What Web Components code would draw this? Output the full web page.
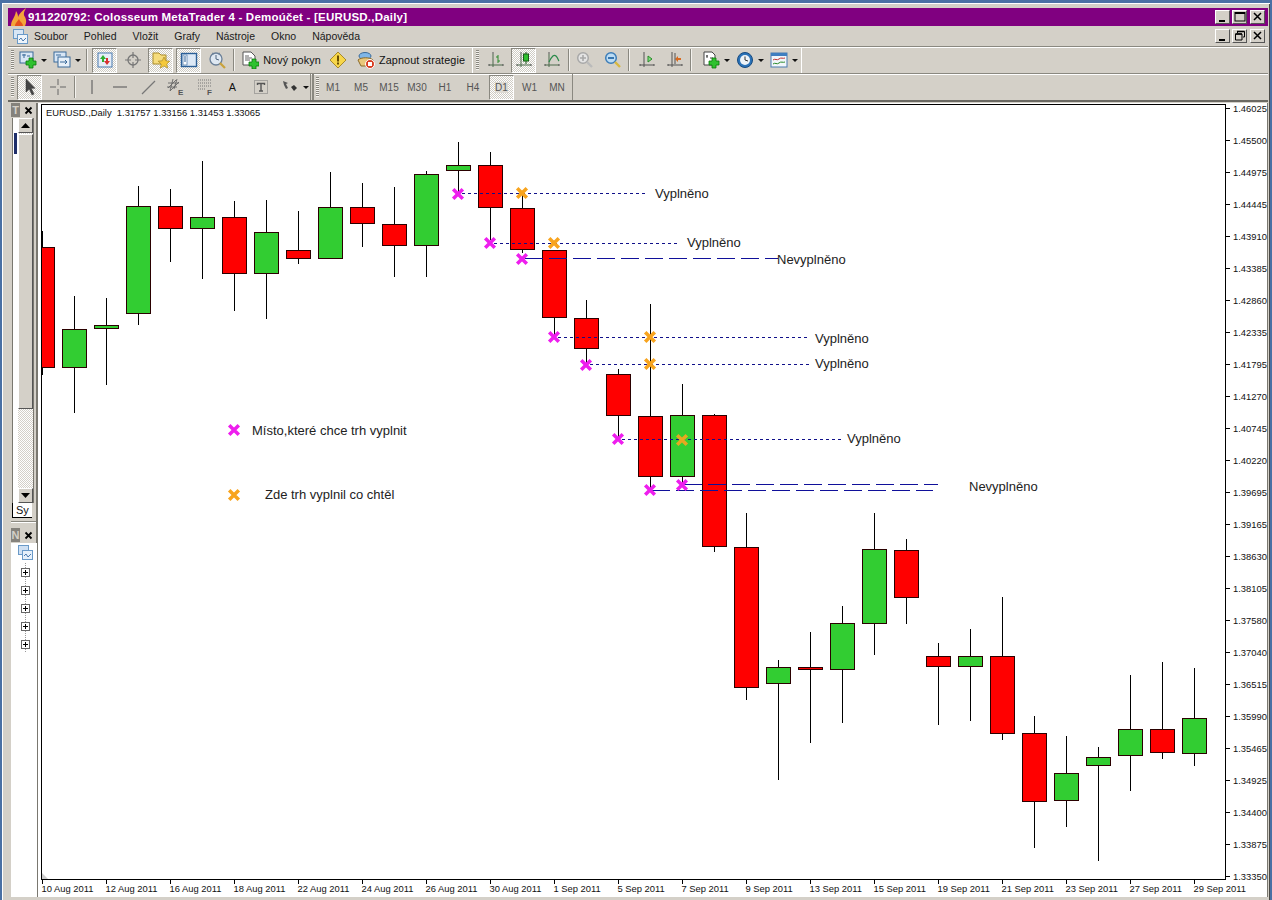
<!DOCTYPE html>
<html lang="cs"><head><meta charset="utf-8"><title>MetaTrader 4</title>
<style>html,body{margin:0;padding:0;background:#d4d0c8;overflow:hidden}</style></head>
<body>
<mt-app>
  <mt-titlebar slot="top">911220792: Colosseum MetaTrader 4 - Demoúčet - [EURUSD.,Daily]</mt-titlebar>
  <mt-menubar slot="top"></mt-menubar>
  <mt-toolbars slot="top"></mt-toolbars>
  <mt-sidebar slot="side"></mt-sidebar>
  <mt-chart slot="main"></mt-chart>
</mt-app>
<script>
const FONT='"Liberation Sans",Arial,sans-serif';
const plus=(x,y)=>`<path d="M${x-2} ${y-5}h4v3h3v4h-3v3h-4v-3h-3v-4h3z" fill="#2fc12f" stroke="#0a7a0a" stroke-width=".8"/>`;
const axes=(c='#4d6b4d')=>`<path d="M6 3v13M2 14h14" stroke="${c}" stroke-width="1" fill="none"/><path d="M1 14h2M15 14h2M5 2h2" stroke="#555" stroke-width="1"/>`;
const ICONS={
 newchart:`<rect x="1" y="1" width="13" height="11" fill="#d8e6f5" stroke="#3a6a9a"/><path d="M3 4h4M5 3v4M8 5h3" stroke="#3a6a9a"/>${plus(12,12)}`,
 profile:`<rect x="1" y="1" width="12" height="10" fill="#d8e6f5" stroke="#3a6a9a"/><rect x="5" y="6" width="12" height="10" fill="#e8f0f8" stroke="#3a6a9a"/><path d="M3 4h5M7 11h7M12 9l2 2-2 2" stroke="#3a6a9a" fill="none"/>`,
 market:`<rect x="2" y="2" width="14" height="14" fill="#e6eef8" stroke="#4a7ab0"/><path d="M7 4l-3 4h2v3h2V8h2z" fill="#2fae2f"/><path d="M11 14l3-4h-2V7h-2v3H8z" fill="#d83030"/>`,
 cross:`<circle cx="9" cy="9" r="5" fill="none" stroke="#777" stroke-width="1.3"/><path d="M9 1v6M9 11v6M1 9h6M11 9h6" stroke="#777" stroke-width="1.2"/>`,
 folder:`<path d="M1 2h6l2 2h5v9H1z" fill="#f6dc7c" stroke="#a88a2a"/><path d="M12 6l1.800 3.800 4 .4-3 2.800.9 4.100-3.700-2.100-3.700 2.100.9-4.100-3-2.800 4-.4z" fill="#f5c93a" stroke="#a88a2a" stroke-width=".7"/>`,
 nav:`<rect x="1.500" y="2.500" width="15" height="13" fill="#dde9f6" stroke="#2b5f97" stroke-width="1.400"/><rect x="3" y="4" width="4" height="10" fill="#fff" stroke="#2b5f97" stroke-width=".6"/><path d="M4 6h2M4 8h2M4 10h2" stroke="#2b5f97"/>`,
 clockzoom:`<circle cx="8" cy="8" r="6" fill="#dfe8f2" stroke="#6a7f98" stroke-width="1.300"/><path d="M8 4v4l3 1" stroke="#50667f" fill="none"/><path d="M4 2l2 1M12 2l-2 1" stroke="#6a7f98"/><path d="M12 12l5 5" stroke="#c9a23c" stroke-width="2.200"/>`,
 order:`<path d="M2 1h8l4 4v9H2z" fill="#fff" stroke="#555"/><path d="M4 5h4M4 7h7M4 9h5" stroke="#666"/>${plus(13,13)}`,
 warn:`<path d="M9 1l8 8-8 8-8-8z" fill="#f7d64a" stroke="#a88a2a"/><rect x="8" y="4.500" width="2" height="6" fill="#6a4e00"/><rect x="8" y="11.500" width="2" height="2" fill="#6a4e00"/>`,
 strat:`<ellipse cx="8" cy="5" rx="6" ry="3.500" fill="#7fb6e8" stroke="#3a6a9a"/><path d="M1 9c3-3 12-3 15 0l-3 6H4z" fill="#e9c77a" stroke="#8a6a2a"/><circle cx="13" cy="13" r="4.500" fill="#d83c20" stroke="#fff"/><rect x="11" y="11" width="4" height="4" fill="#fff"/>`,
 bars:axes()+`<path d="M11 4v8M9 6h2M11 10h2" stroke="#2a8a2a" fill="none"/>`,
 candle:axes()+`<path d="M11 1v12" stroke="#1a5a1a"/><rect x="8.500" y="3" width="5" height="7" fill="#2fc12f" stroke="#1a5a1a"/>`,
 line:axes()+`<path d="M6 11c3-6 5-8 7-6s2 4 3 5" stroke="#2a8a4a" fill="none" stroke-width="1.200"/>`,
 zin:`<circle cx="7" cy="7" r="5.300" fill="#e4e4e4" stroke="#a8a8a8" stroke-width="1.500"/><path d="M4 7h6M7 4v6" stroke="#a8a8a8" stroke-width="1.600"/><path d="M11 11l5 5" stroke="#bbb" stroke-width="2.400"/>`,
 zout:`<circle cx="7" cy="7" r="5.300" fill="#bcdcf4" stroke="#3d7db8" stroke-width="1.500"/><path d="M4 7h6" stroke="#2a6aa8" stroke-width="1.800"/><path d="M11 11l5 5" stroke="#d8b840" stroke-width="2.400"/>`,
 shift:axes('#555')+`<path d="M10 5l4 3-4 3z" fill="#7fe07f" stroke="#2a8a2a"/>`,
 auto:axes('#555')+`<path d="M9 8l3-3v2h3v2h-3v2z" fill="#d86a20"/><path d="M9 2v11" stroke="#555"/>`,
 template:`<path d="M2 1h8l3 3v10H2z" fill="#fff" stroke="#444"/><path d="M4 5h2M5 4v3M8 7h3" stroke="#444"/>${plus(12,12)}`,
 clock:`<circle cx="9" cy="9" r="7.500" fill="#2a72b8" stroke="#174a80"/><circle cx="9" cy="9" r="5" fill="#eef3f8"/><path d="M9 5.500V9l3 1" stroke="#333" fill="none"/>`,
 tmpl2:`<rect x="1" y="2" width="16" height="14" fill="#f2f6fa" stroke="#4a7ab0"/><rect x="1" y="2" width="16" height="3" fill="#3f7ec0"/><path d="M3 9c2-2 4 1 6-1s4 0 6-1" stroke="#c03030" fill="none"/><path d="M3 13c2-2 4 1 6-1s4 0 6-1" stroke="#2a8a2a" fill="none"/>`,
 pointer:`<path d="M5 1v13l3.300-3 2.700 6 2-1-2.700-5.700H14z" fill="#444" stroke="#333" stroke-width=".5"/>`,
 crosshair:`<path d="M9 1v6M9 11v6M1 9h6M11 9h6" stroke="#666"/>`,
 vline:`<path d="M9 2v14" stroke="#666" stroke-width="1.200"/>`,
 hline:`<path d="M2 9h14" stroke="#666" stroke-width="1.200"/>`,
 trend:`<path d="M3 16L16 3" stroke="#777" stroke-width="1.200"/>`,
 channel:`<path d="M1 10L9 2M3 13L12 4M1 5h11M0 9h10M6 1L3 13M10 1L7 11" stroke="#666" fill="none" stroke-width=".9"/><text x="11" y="17" font-family="Liberation Sans" font-size="8" font-weight="bold" fill="#555">E</text>`,
 fib:`<path d="M2 2h14M2 5h14M2 8h14M2 11h8" stroke="#777" stroke-dasharray="1 1"/><text x="11" y="17" font-family="Liberation Sans" font-size="8" font-weight="bold" fill="#555">F</text>`,
 tbox:`<rect x="2.500" y="2.500" width="13" height="13" fill="none" stroke="#777" stroke-dasharray="1 1"/><path d="M5.500 7V5.500h7V7M9 5.500V13M7 13h4" stroke="#555" stroke-width="1.400" fill="none"/>`,
 arrows:`<path d="M2 3l5 2-2 1 2 4-2 1-2-4z" fill="#555"/><path d="M10 9l3-2 3 3-3 3z" fill="#333"/>`
};
const svg=(k,s=18)=>`<svg width="${s}" height="${s}" viewBox="0 0 18 18" aria-hidden="true">${ICONS[k]||''}</svg>`;

class MtTool extends HTMLElement{
 connectedCallback(){
  const w=this.getAttribute('w')||28,ic=this.getAttribute('icon'),ch=this.getAttribute('label'),dd=this.hasAttribute('drop');
  const r=this.attachShadow({mode:'open'});
  r.innerHTML=`<style>
  :host{display:inline-flex;align-items:center;justify-content:center;box-sizing:border-box;height:25px;flex:none;width:${w}px;gap:4px;font:10.8px ${FONT};letter-spacing:.12px;color:#111}
  :host([pressed]){border:1px solid;border-color:#8a8880 #fff #fff #8a8880;background:repeating-conic-gradient(#fff 0 25%,#cfccc4 0 50%) 0 0/2px 2px}
  :host([small]){font-size:10px;color:#555;letter-spacing:0}
  svg{display:block;flex:none}
  i{width:0;height:0;border:3px solid transparent;border-top-color:#111;border-bottom:0;flex:none}
  span{white-space:nowrap}
  :host([pressed]) span{background:#dedbd4}
  </style>${ic?svg(ic):''}${ch?`<span>${ch}</span>`:''}${dd?'<i></i>':''}`;
 }
}
customElements.define('mt-tool',MtTool);

class MtSep extends HTMLElement{connectedCallback(){this.attachShadow({mode:'open'}).innerHTML=`<style>:host{display:block;flex:none;width:1px;height:22px;background:#8a8880;border-right:1px solid #f4f2ee;margin:0 ${this.getAttribute('m')||3}px}</style>`}}
customElements.define('mt-sep',MtSep);
class MtGrip extends HTMLElement{connectedCallback(){this.attachShadow({mode:'open'}).innerHTML=`<style>:host{display:block;flex:none;width:3px;height:20px;background:repeating-linear-gradient(#8a8880 0 1px,#f4f2ee 1px 2px)}</style>`}}
customElements.define('mt-grip',MtGrip);

class MtWinBtn extends HTMLElement{connectedCallback(){
 const k=this.getAttribute('k');
 const g={min:'<path d="M2 10h6" stroke="#000" stroke-width="2"/>',max:'<rect x="1" y="1.500" width="10" height="8.500" fill="none" stroke="#000"/><path d="M1 2h10" stroke="#000" stroke-width="2"/>',close:'<path d="M2 2l7 7M9 2l-7 7" stroke="#000" stroke-width="1.500"/>',restore:'<path d="M3.500 3V1.500h7V7H9M1.500 4h6.500v6H1.500z" fill="none" stroke="#000"/><path d="M3 1.500h7.500M1.500 4H8" stroke="#000" stroke-width="1.500"/>'}[k];
 this.attachShadow({mode:'open'}).innerHTML=`<style>:host{display:flex;align-items:center;justify-content:center;box-sizing:border-box;width:15px;height:14px;flex:none;background:#d4d0c8;border:1px solid;border-color:#fff #555 #555 #fff}</style><svg width="12" height="12" viewBox="0 0 12 12">${g}</svg>`}}
customElements.define('mt-winbtn',MtWinBtn);

class MtTitlebar extends HTMLElement{connectedCallback(){
 const r=this.attachShadow({mode:'open'});
 r.innerHTML=`<style>:host{display:flex;align-items:center;height:18px;background:#800080;color:#fff;font:bold 11.5px ${FONT};padding:0 3px 0 2px}
 svg{flex:none;margin-right:1px}.t{flex:1;white-space:nowrap;letter-spacing:.21px}.b{display:flex;gap:2px}</style>
 <svg width="17" height="18" viewBox="0 0 17 18"><path d="M1 18C1 12 5 10 6 3c2 3 2 5 2 6 1-3 4-6 8-9-2 4-3 6-1 9 2 4 1 7 0 9z" fill="#f4a53a"/><path d="M5 18c0-3 3-5 4-7 1 3 4 4 4 7z" fill="#e5501e"/></svg>
 <div class="t"><slot></slot></div><div class="b"><mt-winbtn k="min"></mt-winbtn><mt-winbtn k="max"></mt-winbtn><mt-winbtn k="close" style="margin-left:1px"></mt-winbtn></div>`;
}}
customElements.define('mt-titlebar',MtTitlebar);

class MtMenubar extends HTMLElement{connectedCallback(){
 const r=this.attachShadow({mode:'open'});
 const items=['Soubor','Pohled','Vložit','Grafy','Nástroje','Okno','Nápověda'];
 r.innerHTML=`<style>:host{display:flex;align-items:center;height:20px;font:10.5px ${FONT};color:#1a1a1a;padding:0 3px 0 5px;border-bottom:1px solid #8a8880;box-shadow:0 1px 0 #fff}
 svg{flex:none;margin-right:6px}.m{display:flex;gap:16px;flex:1}.b{display:flex;gap:2px}</style>
 <svg width="15" height="15" viewBox="0 0 15 15"><rect x=".5" y=".5" width="10" height="9" fill="#d8e6f5" stroke="#6a9ac8"/><rect x="4.500" y="5.500" width="10" height="9" fill="#eef4fa" stroke="#6a9ac8"/><path d="M6 11l2-2 2 3 3-3" stroke="#4a7ab0" fill="none"/></svg>
 <div class="m">${items.map(i=>`<span>${i}</span>`).join('')}</div>
 <div class="b"><mt-winbtn k="min"></mt-winbtn><mt-winbtn k="restore"></mt-winbtn><mt-winbtn k="close" style="margin-left:1px"></mt-winbtn></div>`;
}}
customElements.define('mt-menubar',MtMenubar);

class MtToolbars extends HTMLElement{connectedCallback(){
 const r=this.attachShadow({mode:'open'});
 r.innerHTML=`<style>:host{display:block;border-bottom:2px solid #6a6862}
 .row{display:flex;align-items:center;box-sizing:border-box;height:27px;border-bottom:1px solid #8a8880;box-shadow:0 1px 0 #fff inset}
 .row2{height:26px;border-bottom:0}
 .bar{display:flex;align-items:center;height:100%;box-sizing:border-box;padding-left:3px;border-right:1px solid #8a8880}
 </style>
 <div class="row">
  <div class="bar" style="width:465px;border-right:1px solid #fff">
   <mt-grip></mt-grip><mt-tool icon="newchart" drop w="33" style="margin-left:2px"></mt-tool><mt-tool icon="profile" drop w="35"></mt-tool>
   <mt-sep m="2"></mt-sep><mt-tool icon="market" pressed w="25" style="margin-left:2px"></mt-tool><mt-tool icon="cross" w="31"></mt-tool><mt-tool icon="folder" pressed w="25"></mt-tool><mt-tool icon="nav" pressed w="25" style="margin-left:3px"></mt-tool><mt-tool icon="clockzoom" w="31"></mt-tool>
   <mt-sep m="1"></mt-sep><mt-tool icon="order" label="Nový pokyn" w="88" style="margin-left:1px"></mt-tool><mt-tool icon="warn" w="24" style="margin-left:1px"></mt-tool><mt-tool icon="strat" label="Zapnout strategie" w="118" style="margin-left:2px"></mt-tool>
  </div>
  <div class="bar" style="width:329px;border-right:1px solid #fff">
   <mt-grip></mt-grip><mt-tool icon="bars" w="28" style="margin-left:3px"></mt-tool><mt-tool icon="candle" pressed w="25" style="margin-left:1px"></mt-tool><mt-tool icon="line" w="30" style="margin-left:1px"></mt-tool>
   <mt-sep m="1"></mt-sep><mt-tool icon="zin" w="28"></mt-tool><mt-tool icon="zout" w="28"></mt-tool><mt-sep m="1"></mt-sep><mt-tool icon="shift" w="28" style="margin-left:2px"></mt-tool><mt-tool icon="auto" w="28"></mt-tool><mt-sep m="1"></mt-sep><mt-tool icon="template" drop w="34" style="margin-left:6px"></mt-tool><mt-tool icon="clock" drop w="36" style="margin-left:-1px"></mt-tool><mt-tool icon="tmpl2" drop w="36" style="margin-left:-2px"></mt-tool>
  </div>
 </div>
 <div class="row row2">
  <div class="bar" style="width:303px;border-right:1px solid #8a8880">
   <mt-grip></mt-grip><mt-tool icon="pointer" pressed w="25" style="margin-left:3px"></mt-tool><mt-tool icon="crosshair" w="31"></mt-tool><mt-sep m="1"></mt-sep><mt-tool icon="vline" w="29"></mt-tool><mt-tool icon="hline" w="28"></mt-tool><mt-tool icon="trend" w="28"></mt-tool><mt-tool icon="channel" w="28"></mt-tool><mt-tool icon="fib" w="28" style="margin-left:1px"></mt-tool><mt-tool label="A" w="27" style="font:bold 12px ${FONT};color:#666;margin-left:-5px"></mt-tool><mt-tool icon="tbox" w="28" style="margin-left:1px"></mt-tool><mt-tool icon="arrows" drop w="34" style="margin-left:3px"></mt-tool>
  </div>
  <div class="bar" style="width:261px;padding-left:2px;border-left:2px solid #8a8880;margin-left:1px">
   <mt-grip></mt-grip><mt-tool small label="M1" w="28"></mt-tool><mt-tool small label="M5" w="28"></mt-tool><mt-tool small label="M15" w="28"></mt-tool><mt-tool small label="M30" w="28"></mt-tool><mt-tool small label="H1" w="28"></mt-tool><mt-tool small label="H4" w="28"></mt-tool><mt-tool small pressed label="D1" w="25" style="margin-left:2px"></mt-tool><mt-tool small label="W1" w="31"></mt-tool><mt-tool small label="MN" w="24"></mt-tool>
  </div>
 </div>`;
}}
customElements.define('mt-toolbars',MtToolbars);

class MtPanelHead extends HTMLElement{connectedCallback(){
 this.attachShadow({mode:'open'}).innerHTML=`<style>:host{display:flex;align-items:center;justify-content:space-between;height:14px;padding:0 3px 0 0;font:bold 11px ${FONT}}
 b{display:block;width:9px;height:14px;background:#85827c;color:#d4d0c8;font:bold 11px ${FONT};text-align:center;line-height:14px;overflow:hidden}
 svg{display:block}</style><b>${this.getAttribute('t')}</b><svg width="9" height="9" viewBox="0 0 9 9"><path d="M1.500 1.500l6 6M7.500 1.500l-6 6" stroke="#000" stroke-width="1.800"/></svg>`}}
customElements.define('mt-panelhead',MtPanelHead);

class MtSidebar extends HTMLElement{connectedCallback(){
 const r=this.attachShadow({mode:'open'});
 const btn=(up)=>`<div class="sb"><svg width="9" height="5" viewBox="0 0 9 5"><path d="${up?'M0 5L4.500 0 9 5z':'M0 0L4.500 5 9 0z'}" fill="#000"/></svg></div>`;
 const plus='<div class="p"><svg width="9" height="9" viewBox="0 0 9 9"><rect x=".5" y=".5" width="8" height="8" fill="#fff" stroke="#666"/><path d="M2 4.500h5M4.500 2v5" stroke="#000"/></svg></div>';
 r.innerHTML=`<style>:host{display:flex;flex-direction:column;width:30px;flex:none;box-sizing:border-box;padding-left:3px;border-right:2px solid #7a7870}
 .mw{height:419px;flex:none;display:flex;flex-direction:column;border-bottom:1px solid #8a8880;box-shadow:0 1px 0 #fff;box-sizing:border-box}
 .list{flex:none;height:385px;display:flex;margin:1px 0 0 1px}
 .col{width:5px;background:#fff;border-left:1px solid #7a7870;display:flex;flex-direction:column}
 .col i{display:block;height:21px;margin:15px 1px 0 1px;background:#1f2f6a;width:3px}
 .sc{width:15px;display:flex;flex-direction:column;background:repeating-conic-gradient(#fff 0 25%,#d4d0c8 0 50%) 0 0/2px 2px;border-right:1px solid #7a7870}
 .sb{box-sizing:border-box;height:15px;flex:none;background:#d4d0c8;border:1px solid;border-color:#fff #555 #555 #fff;display:flex;align-items:center;justify-content:center}
 .th{box-sizing:border-box;height:275px;flex:none;background:#d4d0c8;border:1px solid;border-color:#fff #555 #555 #fff;margin-top:1px}
 .sp{flex:1}
 .tab{font:11px ${FONT};height:15px;width:20px;box-sizing:border-box;margin-left:1px;border:1px solid #000;border-top:0;border-right:0;background:#fff;padding-left:3px;line-height:14px;overflow:hidden;color:#111}
 .nav{flex:1;display:flex;flex-direction:column;margin-top:6px}
 .tree{flex:1;background:#fff;margin:1px 0 0 0;display:flex;flex-direction:column;align-items:center;width:24px;padding:2px 0 0 2px;box-sizing:content-box}
 .p{height:18px;display:flex;align-items:center;background:repeating-linear-gradient(#999 0 1px,transparent 1px 2px) center/1px 100% no-repeat}
 .ic{display:block;margin-bottom:3px}
 </style>
 <div class="mw"><mt-panelhead t="T"></mt-panelhead>
  <div class="list"><div class="col"><i></i></div><div class="sc">${btn(1)}<div class="th"></div><div class="sp"></div>${btn(0)}</div></div>
  <div class="tab">Sy</div></div>
 <div class="nav"><mt-panelhead t="N"></mt-panelhead>
  <div class="tree"><svg class="ic" width="15" height="15" viewBox="0 0 15 15"><rect x=".5" y=".5" width="10" height="9" fill="#cfe0f3" stroke="#6a9ac8"/><rect x="4.500" y="5.500" width="10" height="9" fill="#e6f0fa" stroke="#6a9ac8"/><path d="M6 11l2-2 2 3 3-3" stroke="#4a7ab0" fill="none"/></svg>${plus.repeat(5)}</div></div>`;
}}
customElements.define('mt-sidebar',MtSidebar);

class MtChart extends HTMLElement{connectedCallback(){
 const C=[[42,231,375,247,368,0],[74,296,413,329,368,1],[106,298,385,325,329,1],[138,186,325,206,314,1],[170,189,262,206,229,0],[202,161,279,217,229,1],[234,201,311,217,274,0],[266,200,319,232,274,1],[298,211,264,250,259,0],[330,172,259,207,259,1],[362,183,247,207,224,0],[394,187,277,224,246,0],[426,171,277,174,246,1],[458,142,195,165,171,1],[490,152,240,165,208,0],[522,192,253,208,250,0],[554,250,335,250,318,0],[586,300,365,318,349,0],[618,369,440,374,416,0],[650,304,490,416,477,0],[682,384,485,415,477,1],[714,414,552,415,547,0],[746,513,700,547,688,0],[778,660,780,667,684,1],[810,632,743,667,670,0],[842,606,723,623,670,1],[874,513,655,549,624,1],[906,539,624,550,598,0],[938,643,725,656,667,0],[970,629,721,656,667,1],[1002,597,740,656,734,0],[1034,716,848,733,802,0],[1066,736,827,773,801,1],[1098,747,861,757,766,1],[1130,675,791,729,756,1],[1162,662,759,729,753,0],[1194,668,766,718,754,1]];
 const prices='1.46025 1.45500 1.44975 1.44445 1.43910 1.43385 1.42860 1.42335 1.41795 1.41270 1.40745 1.40220 1.39695 1.39165 1.38630 1.38105 1.37580 1.37040 1.36515 1.35990 1.35465 1.34925 1.34400 1.33875 1.33350'.split(' ');
 const dates=['10 Aug 2011','12 Aug 2011','16 Aug 2011','18 Aug 2011','22 Aug 2011','24 Aug 2011','26 Aug 2011','30 Aug 2011','1 Sep 2011','5 Sep 2011','7 Sep 2011','9 Sep 2011','13 Sep 2011','15 Sep 2011','19 Sep 2011','21 Sep 2011','23 Sep 2011','27 Sep 2011','29 Sep 2011'];
 let s='';
 s+=`<g clip-path="url(#pl)" shape-rendering="crispEdges">`;
 for(const [x,a,b,t,e,g] of C){
  s+=`<path d="M${x+.5} ${a}V${b}" stroke="#000"/><rect x="${x-11.5}" y="${t+.5}" width="24" height="${e-t-1}" fill="${g?'#32cd32':'#ff0000'}" stroke="#2a0000"/>`;
 }
 s+='</g>';
 const dl=(y,a,b)=>`<path d="M${a} ${y}H${b}" stroke="#10108a" stroke-dasharray="3 3" shape-rendering="crispEdges"/>`;
 const ll=(y,a,b)=>`<path d="M${a} ${y}H${b}" stroke="#10109a" stroke-dasharray="18 6" shape-rendering="crispEdges"/>`;
 s+=dl(193.5,462,648)+dl(243.5,494,680)+dl(337.5,558,810)+dl(364.5,590,810)+dl(439.5,622,842);
 s+=ll(258.5,525,778)+ll(484.5,684,938)+ll(490.5,652,933);
 const X=(x,y,c)=>`<path d="M${x-4.800} ${y-4.800}L${x+4.800} ${y+4.800}M${x+4.800} ${y-4.800}L${x-4.800} ${y+4.800}" stroke="${c}" stroke-width="3.500"/>`;
 [[458,194],[490,243],[522,259],[554,337],[586,365],[618,439],[650,490],[682,485],[234,430]].forEach(p=>s+=X(p[0],p[1],'#ee1eee'));
 [[522,193],[554,243],[650,337],[650,364],[234,495]].forEach(p=>s+=X(p[0],p[1],'#f8a41e'));
 s+=X(682,440,'#e6a820');
 const T=(x,y,t)=>`<text x="${x}" y="${y}" class="a">${t}</text>`;
 s+=T(655,198,'Vyplněno')+T(687,247,'Vyplněno')+T(815,343,'Vyplněno')+T(815,368,'Vyplněno')+T(847,443,'Vyplněno')+T(777,264,'Nevyplněno')+T(969,491,'Nevyplněno')+T(252,435,'Místo,které chce trh vyplnit')+T(265,499,'Zde trh vyplnil co chtěl');
 s+=`<text x="46" y="115.500" class="e" xml:space="preserve">EURUSD.,Daily  1.31757 1.33156 1.31453 1.33065</text>`;
 s+=`<rect x="41.500" y="104.500" width="1184" height="775" fill="none" stroke="#000" shape-rendering="crispEdges"/><path d="M42 873v6h6z" fill="#ccc"/>`;
 prices.forEach((p,i)=>{const y=108+i*32;s+=`<path d="M1226 ${y+.5}h4" stroke="#000" shape-rendering="crispEdges"/><text x="1233" y="${y+3.500}" class="s">${p}</text>`});
 dates.forEach((d,i)=>{const x=42+i*64;s+=`<path d="M${x+.5} 880v4" stroke="#000" shape-rendering="crispEdges"/><text x="${x-.5}" y="892" class="s">${d}</text>`});
 this.attachShadow({mode:'open'}).innerHTML=`<style>:host{display:block;flex:1;min-width:0;background:#fff;border-right:1px solid #7a7870;height:100%}
 svg{display:block}
 .a{font:13px ${FONT};fill:#222}.s{font:9.4px ${FONT};fill:#111}.e{font:9.4px ${FONT};fill:#111}</style>
 <svg width="1229" height="794" viewBox="38 103 1229 794"><defs><clipPath id="pl"><rect x="42" y="105" width="1183" height="774"/></clipPath></defs>${s}</svg>`;
}}
customElements.define('mt-chart',MtChart);

class MtApp extends HTMLElement{connectedCallback(){
 this.attachShadow({mode:'open'}).innerHTML=`<style>:host{display:block;box-sizing:border-box;width:1272px;height:900px;background:#d4d0c8;border-top:3px solid #4a70a4;border-left:2px solid #4a70a4;border-right:2px solid #4a70a4;overflow:hidden}
 .frame{height:100%;box-sizing:border-box;display:flex;flex-direction:column;padding:5px 2px 3px 6px;box-shadow:1px 1px 0 #fff inset,-1px 0 0 #4a4a46 inset}
 .top{flex:none;display:flex;flex-direction:column}
 .work{flex:1;display:flex;min-height:0;margin-top:1px}</style>
 <div class="frame"><div class="top"><slot name="top"></slot></div><div class="work"><slot name="side"></slot><slot name="main"></slot></div></div>`;
}}
customElements.define('mt-app',MtApp);
</script>
</body></html>
